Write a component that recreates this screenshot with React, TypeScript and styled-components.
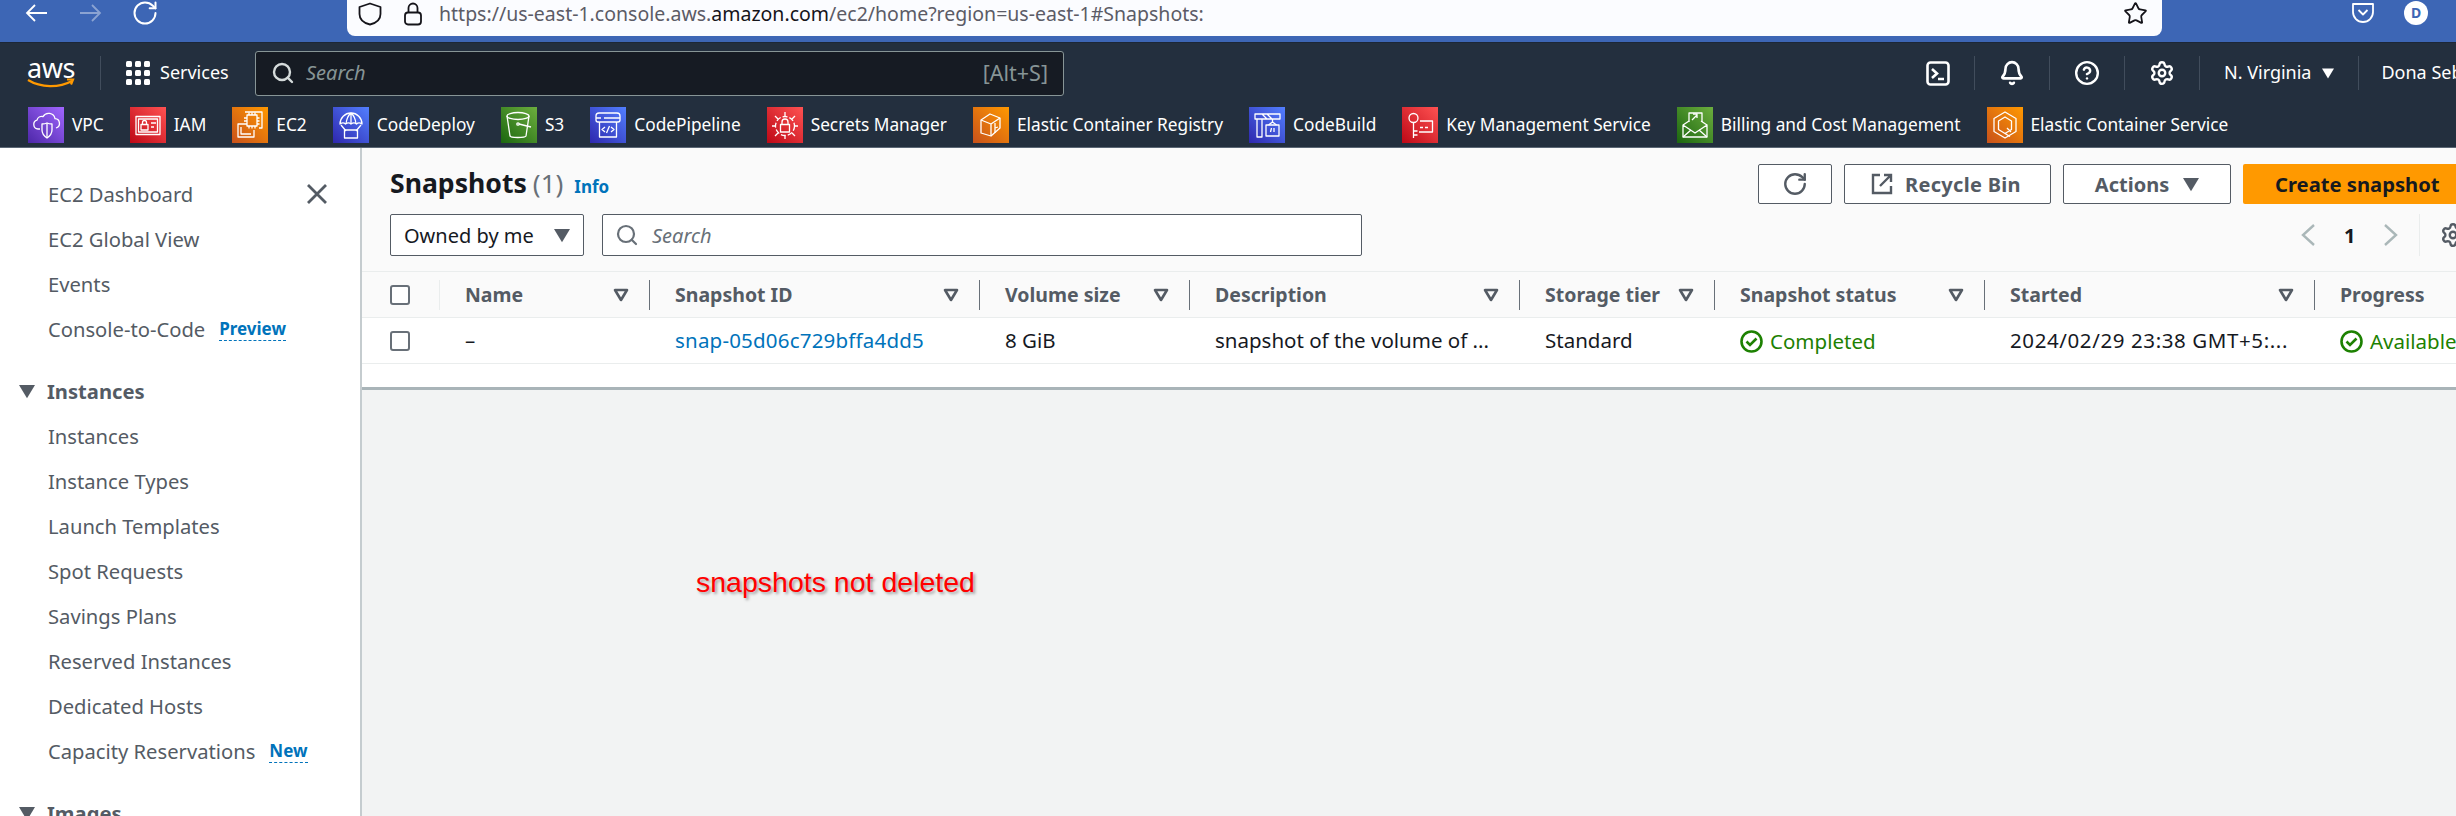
import styled, { createGlobalStyle } from 'styled-components';
import { Bell, CircleHelp, RotateCw, Search, Settings, Star } from 'lucide-react';
import type { ReactNode } from 'react';

const FONT = '"Noto Sans", "Open Sans", Arial, sans-serif';

const GlobalStyle = createGlobalStyle`
  html, body {
    margin: 0;
    width: 2456px;
    height: 816px;
    overflow: hidden;
    background: #fff;
    font-family: ${FONT};
  }
  * { box-sizing: border-box; }
`;

const TONES = {
  purple: 'linear-gradient(45deg, #4d27a8, #a166ff)',
  red: 'linear-gradient(45deg, #bd0816, #ff5252)',
  orange: 'linear-gradient(45deg, #c8511b, #ff9900)',
  blue: 'linear-gradient(45deg, #2e27ad, #527fff)',
  green: 'linear-gradient(45deg, #1b660f, #6cae3e)',
};

type Tone = keyof typeof TONES;

const Glyph = ({ children }: { children: ReactNode }) => (
  <svg width="36" height="36" viewBox="0 0 36 36" fill="none" stroke="#fff" strokeWidth="1.3" strokeLinejoin="round">
    {children}
  </svg>
);

const SERVICES: { name: string; tone: Tone; glyph: ReactNode }[] = [
  {
    name: 'VPC',
    tone: 'purple',
    glyph: (
      <>
        <path d="M12 22H10a4.5 4.5 0 0 1-1-8.8 5 5 0 0 1 6-3.6 6.5 6.5 0 0 1 12 2 4.8 4.8 0 0 1 1 9.4" />
        <path d="M14 17c3 0 5-1 5-1s2 1 5 1v6c0 4-2 6-5 8-3-2-5-4-5-8z" />
        <path d="M19 16v15" />
      </>
    ),
  },
  {
    name: 'IAM',
    tone: 'red',
    glyph: (
      <>
        <rect x="6" y="9.5" width="24" height="18" />
        <rect x="8.5" y="12" width="19" height="13" />
        <rect x="11" y="17.5" width="7" height="5.5" />
        <path d="M12.5 17.5v-2a2 2 0 0 1 4 0v2M21 16h5M21 20h3" />
      </>
    ),
  },
  {
    name: 'EC2',
    tone: 'orange',
    glyph: (
      <>
        <path d="M13 5h17v16h-3" />
        <path d="M12 17H6v13h16v-7" />
        <path d="M9 20v7h10" />
        <rect x="15" y="8" width="10" height="11" />
        <path d="M17 5.5V8M20 5.5V8M23 5.5V8M17 19v2.5M20 19v2.5M23 19v2.5M12 11h3M12 14h3M12 17h3M25 11h2.5M25 14h2.5M25 17h2.5" />
      </>
    ),
  },
  {
    name: 'CodeDeploy',
    tone: 'blue',
    glyph: (
      <>
        <path d="M7 17a11 11 0 0 1 22 0c-2-1.5-4-1.5-5.5 0-1.5-1.5-3.5-1.5-5.5 0-1.5-1.5-3.5-1.5-5.5 0C11 15.5 9 15.5 7 17z" />
        <path d="M18 6v11M18 6c-3 2.5-4.5 6-5 11M18 6c3 2.5 4.5 6 5 11M8 18l5 6M28 18l-5 6" />
        <rect x="11.5" y="23" width="13" height="8" />
      </>
    ),
  },
  {
    name: 'S3',
    tone: 'green',
    glyph: (
      <>
        <ellipse cx="17" cy="9" rx="11" ry="3.5" />
        <path d="M6 9l3 20c.5 2 15 2 16 0l3-20" />
        <path d="M18 17l12 3" />
        <circle cx="17" cy="17" r="1.2" />
      </>
    ),
  },
  {
    name: 'CodePipeline',
    tone: 'blue',
    glyph: (
      <>
        <path d="M9 15H8a2 2 0 0 1-2-2V9a3 3 0 0 1 3-3h18a3 3 0 0 1 3 3v4a2 2 0 0 1-2 2h-1" />
        <path d="M6 11h5M14 11h16" />
        <rect x="9.5" y="15" width="17" height="15" />
        <path d="M15 20l-3 2.5 3 2.5M21 20l3 2.5-3 2.5M19.5 19l-3 7" />
      </>
    ),
  },
  {
    name: 'Secrets Manager',
    tone: 'red',
    glyph: (
      <>
        <circle cx="18" cy="19" r="9.5" strokeDasharray="5 2" />
        <rect x="13.5" y="17.5" width="9" height="7.5" />
        <path d="M15 17.5V15a3 3 0 0 1 6 0v2.5M18 5v4M18 29v3M5 19h3M28 19h3M8 9l3 3M28 9l-3 3M8 29l3-3M28 29l-3-3" />
      </>
    ),
  },
  {
    name: 'Elastic Container Registry',
    tone: 'orange',
    glyph: (
      <>
        <path d="M8 13l9-6 10 4v10l-9 8-10-3z" />
        <path d="M8 13l10 4v12M18 17l9-6M22 16v10M22 21l3-1" />
      </>
    ),
  },
  {
    name: 'CodeBuild',
    tone: 'blue',
    glyph: (
      <>
        <path d="M6 7h25v5H6zM8 12v18h5V12M13 7l5 5M18 7l5 5" />
        <rect x="17" y="18" width="13" height="11" />
        <path d="M23.5 12v3l-4 3M23.5 15l4 3M21.5 25l1-4M25 21v4" />
      </>
    ),
  },
  {
    name: 'Key Management Service',
    tone: 'red',
    glyph: (
      <>
        <circle cx="11.5" cy="11" r="4.5" />
        <path d="M11.5 15.5V31M11.5 24h4M11.5 28h4M18 14h12.5v11H17" />
        <path d="M18 20.5h3M23 20.5h3" />
      </>
    ),
  },
  {
    name: 'Billing and Cost Management',
    tone: 'green',
    glyph: (
      <>
        <path d="M12 15V6h13v9" />
        <path d="M15 13l5-5M16 7h4v4" />
        <path d="M6 18l6-4M30 18l-6-4M6 18v12h24V18l-12 8z" />
        <path d="M6 30l8-7M30 30l-8-7" />
      </>
    ),
  },
  {
    name: 'Elastic Container Service',
    tone: 'orange',
    glyph: (
      <>
        <path d="M18 5l11 6.5v13L18 31 7 24.5v-13z" />
        <path d="M18 10l6.5 4v8.5L18 26.5l-6.5-4V14zM18 26.5l5 3M20 21l4 4" />
      </>
    ),
  },
];

const GRID = '78px 210px 330px 210px 330px 195px 270px 330px 200px';

const COLUMNS = ['Name', 'Snapshot ID', 'Volume size', 'Description', 'Storage tier', 'Snapshot status', 'Started'];

const NAV_TOP = ['EC2 Dashboard', 'EC2 Global View', 'Events'];
const NAV_INSTANCES = ['Instances', 'Instance Types', 'Launch Templates', 'Spot Requests', 'Savings Plans', 'Reserved Instances', 'Dedicated Hosts'];

const SortMark = () => (
  <svg width="16" height="14" viewBox="0 0 16 14" fill="none" stroke="#545b64" strokeWidth="2.6" strokeLinejoin="round">
    <path d="M2 2h12l-6 10z" />
  </svg>
);

const CheckedCircle = () => (
  <svg width="23" height="23" viewBox="0 0 23 23" fill="none" stroke="#1d8102" strokeWidth="2.6">
    <circle cx="11.5" cy="11.5" r="10" />
    <path d="M6.5 11.5l3.5 3.5 6.5-6.5" />
  </svg>
);

const Caret = ({ size = 13, color = '#545b64' }: { size?: number; color?: string }) => (
  <svg width={size} height={size} viewBox="0 0 12 12" fill={color}>
    <path d="M0 1.5h12L6 11.5z" />
  </svg>
);

export default function App() {
  return (
    <Page>
      <GlobalStyle />
      <BrowserBar>
        <BrowserNav>
          <svg width="22" height="20" viewBox="0 0 22 20" fill="none" stroke="#fff" strokeWidth="1.8">
            <path d="M22 10H2M10 2l-8 8 8 8" />
          </svg>
          <DimIcon>
            <svg width="22" height="20" viewBox="0 0 22 20" fill="none" stroke="#fff" strokeWidth="1.8">
              <path d="M0 10h20M12 2l8 8-8 8" />
            </svg>
          </DimIcon>
          <ReloadSlot><RotateCw size={28} strokeWidth={1.7} /></ReloadSlot>
        </BrowserNav>
        <UrlBar>
          <svg width="24" height="24" viewBox="0 0 24 24" fill="none" stroke="#15141a" strokeWidth="1.8" strokeLinejoin="round">
            <path d="M12 1.5L22.5 5v7c0 5.5-4 9-10.5 10.5C5.5 21 1.5 17.5 1.5 12V5z" />
          </svg>
          <svg width="20" height="24" viewBox="0 0 20 24" fill="none" stroke="#15141a" strokeWidth="1.8">
            <rect x="2" y="10.5" width="16" height="12" rx="3" />
            <path d="M5.5 10.5V6a4.5 4.5 0 0 1 9 0v4.5" />
          </svg>
          <UrlText>https://us-east-1.console.aws.<b>amazon.com</b>/ec2/home?region=us-east-1#Snapshots:</UrlText>
          <StarSlot><Star size={25} strokeWidth={1.7} /></StarSlot>
        </UrlBar>
        <BrowserExtras>
          <svg width="24" height="22" viewBox="0 0 24 22" fill="none" stroke="#fff" strokeWidth="1.8" strokeLinejoin="round">
            <path d="M2 2h20v8a10 10 0 0 1-20 0z" />
            <path d="M7.5 8l4.5 4.5L16.5 8" />
          </svg>
          <Avatar>D</Avatar>
        </BrowserExtras>
      </BrowserBar>

      <ConsoleHeader>
        <TopRow>
          <AwsLogo>
            <AwsWord>aws</AwsWord>
            <svg width="48" height="11" viewBox="0 0 48 11" fill="none" stroke="#ff9900" strokeWidth="2.2">
              <path d="M1 2c13 8 31 8 44 1" />
              <path d="M40 1.5h6l-2 5" />
            </svg>
          </AwsLogo>
          <LogoDivider />
          <ServicesMenu>
            <Dots>
              {Array.from({ length: 9 }).map((_, i) => <Dot key={i} />)}
            </Dots>
            <HeaderLabel>Services</HeaderLabel>
          </ServicesMenu>
          <GlobalSearch>
            <Search size={24} strokeWidth={2.4} color="#d5dbdb" />
            <SearchHint>Search</SearchHint>
            <Shortcut>[Alt+S]</Shortcut>
          </GlobalSearch>
          <Tools>
            <Tool>
              <svg width="24" height="25" viewBox="0 0 24 25" fill="none" stroke="#fff" strokeWidth="2.6">
                <rect x="1.5" y="1.5" width="21" height="22" rx="3" />
                <path d="M6 8l5 4.5L6 17M12 18h6" />
              </svg>
            </Tool>
            <Tool><Bell size={26} strokeWidth={2.4} /></Tool>
            <Tool><CircleHelp size={26} strokeWidth={2.2} /></Tool>
            <Tool><Settings size={26} strokeWidth={2.2} /></Tool>
            <Tool>
              <HeaderLabel>N. Virginia</HeaderLabel>
              <Caret size={12} color="#fff" />
            </Tool>
            <UserName>Dona Seb</UserName>
          </Tools>
        </TopRow>
        <Favorites>
          {SERVICES.map((s) => (
            <Favorite key={s.name}>
              <ServiceTile $tone={s.tone}><Glyph>{s.glyph}</Glyph></ServiceTile>
              <HeaderLabel>{s.name}</HeaderLabel>
            </Favorite>
          ))}
        </Favorites>
      </ConsoleHeader>

      <Body>
        <Sidebar>
          <NavTopItem>
            <span>{NAV_TOP[0]}</span>
            <svg width="20" height="20" viewBox="0 0 20 20" fill="none" stroke="#545b64" strokeWidth="2.8">
              <path d="M1 1l18 18M19 1L1 19" />
            </svg>
          </NavTopItem>
          {NAV_TOP.slice(1).map((n) => <NavItem key={n}>{n}</NavItem>)}
          <NavItem>Console-to-Code<Badge>Preview</Badge></NavItem>
          <NavGroup><Caret size={16} />Instances</NavGroup>
          {NAV_INSTANCES.map((n) => <NavItem key={n}>{n}</NavItem>)}
          <NavItem>Capacity Reservations<Badge>New</Badge></NavItem>
          <NavGroup><Caret size={16} />Images</NavGroup>
        </Sidebar>

        <Main>
          <ListPanel>
            <TitleRow>
              <Heading>
                <Title>Snapshots</Title>
                <Count>(1)</Count>
                <InfoLink>Info</InfoLink>
              </Heading>
              <Actions>
                <GhostButton $width={74}><RotateCw size={26} strokeWidth={2.2} /></GhostButton>
                <GhostButton $width={207}>
                  <svg width="24" height="24" viewBox="0 0 24 24" fill="none" stroke="#545b64" strokeWidth="2.4">
                    <path d="M10 3H3v18h18v-7M14 3h7v7M21 3L10 14" />
                  </svg>
                  <WideLabel>Recycle Bin</WideLabel>
                </GhostButton>
                <GhostButton $width={168}>Actions<Caret size={16} /></GhostButton>
                <PrimaryButton>Create snapshot</PrimaryButton>
              </Actions>
            </TitleRow>
            <FilterRow>
              <OwnerSelect>Owned by me<Caret size={16} /></OwnerSelect>
              <FilterSearch>
                <Search size={24} strokeWidth={2.2} color="#687078" />
                <em>Search</em>
              </FilterSearch>
              <Pager>
                <svg width="16" height="24" viewBox="0 0 16 24" fill="none" stroke="#aab7b8" strokeWidth="2.4"><path d="M14 2L3 12l11 10" /></svg>
                <PageNumber>1</PageNumber>
                <svg width="16" height="24" viewBox="0 0 16 24" fill="none" stroke="#aab7b8" strokeWidth="2.4"><path d="M2 2l11 10L2 22" /></svg>
                <PagerGear><Settings size={26} strokeWidth={2.2} color="#545b64" /></PagerGear>
              </Pager>
            </FilterRow>
            <HeadRow>
              <CheckHead><Checkbox /></CheckHead>
              {COLUMNS.map((c) => (
                <HeadCell key={c}>
                  <span>{c}</span>
                  <SortMark />
                </HeadCell>
              ))}
              <LastHeadCell>Progress</LastHeadCell>
            </HeadRow>
          </ListPanel>
          <DataArea>
            <DataRow>
              <CheckBody><Checkbox /></CheckBody>
              <BodyCell>–</BodyCell>
              <BodyCell><SnapshotLink>snap-05d06c729bffa4dd5</SnapshotLink></BodyCell>
              <BodyCell>8 GiB</BodyCell>
              <BodyCell>snapshot of the volume of ...</BodyCell>
              <BodyCell>Standard</BodyCell>
              <BodyCell><Status><CheckedCircle />Completed</Status></BodyCell>
              <BodyCell><DateText>2024/02/29 23:38 GMT+5:...</DateText></BodyCell>
              <BodyCell><Status><CheckedCircle />Available</Status></BodyCell>
            </DataRow>
          </DataArea>
          <EmptyArea>
            <Annotation>snapshots not deleted</Annotation>
          </EmptyArea>
        </Main>
      </Body>
    </Page>
  );
}

const Page = styled.div`
  width: 2456px;
  height: 816px;
  display: flex;
  flex-direction: column;
  overflow: hidden;
`;

const BrowserBar = styled.div`
  height: 42px;
  flex: none;
  display: flex;
  align-items: flex-start;
  background: #3d66b5;
  color: #fff;
`;

const BrowserNav = styled.div`
  width: 347px;
  height: 26px;
  flex: none;
  padding-left: 25px;
  display: flex;
  align-items: center;
  gap: 33px;
`;

const DimIcon = styled.span`
  display: flex;
  opacity: 0.4;
`;

const ReloadSlot = styled.span`
  display: flex;
  margin-left: -4px;
`;

const UrlBar = styled.div`
  width: 1815px;
  height: 36px;
  flex: none;
  padding: 0 12px 9px 11px;
  display: flex;
  align-items: center;
  gap: 21px;
  background: #fbfcff;
  border-radius: 0 0 8px 8px;
  color: #15141a;
`;

const UrlText = styled.div`
  margin-left: -5px;
  font-size: 19.5px;
  color: #5b5b66;
  white-space: nowrap;

  b {
    font-weight: 400;
    color: #15141a;
  }
`;

const StarSlot = styled.span`
  display: flex;
  margin-left: auto;
  margin-right: 2px;
`;

const BrowserExtras = styled.div`
  height: 25px;
  padding-left: 189px;
  display: flex;
  align-items: center;
  gap: 29px;
`;

const Avatar = styled.span`
  width: 24px;
  height: 24px;
  border-radius: 50%;
  background: #fff;
  color: #3d66b5;
  display: flex;
  align-items: center;
  justify-content: center;
  font-size: 14px;
  font-weight: 700;
`;

const ConsoleHeader = styled.header`
  height: 106px;
  flex: none;
  background: #232f3e;
  border-top: 1px solid #1c2737;
  border-bottom: 1px solid #5b6775;
  color: #fff;
`;

const TopRow = styled.div`
  height: 64px;
  display: flex;
  align-items: center;
  padding: 0 0 4px 27px;
  white-space: nowrap;
`;

const HeaderLabel = styled.span`
  padding-bottom: 2px;
`;

const AwsLogo = styled.div`
  width: 48px;
  flex: none;
  display: flex;
  flex-direction: column;
  align-items: center;
`;

const AwsWord = styled.span`
  font-size: 27px;
  line-height: 20px;
  letter-spacing: -0.5px;
`;

const LogoDivider = styled.span`
  width: 1px;
  height: 34px;
  margin: 0 25px;
  flex: none;
  background: #414d5c;
`;

const ServicesMenu = styled.div`
  width: 129px;
  flex: none;
  display: flex;
  align-items: center;
  gap: 10px;
  font-size: 18px;
`;

const Dots = styled.div`
  display: grid;
  grid-template-columns: repeat(3, 6px);
  grid-auto-rows: 6px;
  gap: 3px;
`;

const Dot = styled.i`
  border-radius: 1.5px;
  background: #fff;
`;

const GlobalSearch = styled.div`
  width: 809px;
  height: 45px;
  flex: none;
  padding: 0 15px;
  display: flex;
  align-items: center;
  gap: 11px;
  background: #161b23;
  border: 1px solid #879596;
  border-radius: 3px;
`;

const SearchHint = styled.em`
  padding-bottom: 2px;
  font-size: 20px;
  color: #879596;
`;

const Shortcut = styled.span`
  margin-left: auto;
  padding-bottom: 2px;
  font-size: 21.5px;
  color: #879596;
`;

const Tools = styled.div`
  margin-left: 838px;
  flex: none;
  display: flex;
  align-items: center;
`;

const Tool = styled.div`
  height: 34px;
  padding: 0 24px;
  display: flex;
  align-items: center;
  gap: 11px;
  border-right: 1px solid #414d5c;
  font-size: 18px;
`;

const UserName = styled.span`
  padding: 0 0 2px 22px;
  font-size: 18px;
`;

const Favorites = styled.nav`
  height: 36px;
  padding-left: 28px;
  display: flex;
  gap: 26px;
  white-space: nowrap;
`;

const Favorite = styled.div`
  display: flex;
  align-items: center;
  gap: 8px;
  flex: none;
  font-size: 17.3px;
`;

const ServiceTile = styled.span<{ $tone: Tone }>`
  width: 36px;
  height: 36px;
  display: block;
  background: ${(p) => TONES[p.$tone]};
`;

const Body = styled.div`
  flex: 1;
  min-height: 0;
  display: flex;
`;

const Sidebar = styled.aside`
  width: 362px;
  flex: none;
  padding: 23.5px 0 0;
  background: #fff;
  border-right: 2px solid #c5cccf;
  color: #545b64;
  font-size: 20.2px;
`;

const NavItem = styled.div`
  height: 45px;
  padding-left: 48px;
  display: flex;
  align-items: center;
`;

const NavTopItem = styled(NavItem)`
  justify-content: space-between;
  padding-right: 33px;
`;

const NavGroup = styled.div`
  height: 45px;
  margin-top: 17px;
  padding-left: 19px;
  display: flex;
  align-items: center;
  gap: 12px;
  font-weight: 700;
`;

const Badge = styled.span`
  margin-left: 14px;
  font-size: 17px;
  font-weight: 700;
  color: #0073bb;
  border-bottom: 1px dashed #0073bb;
`;

const Main = styled.main`
  flex: 1;
  min-width: 0;
  display: flex;
  flex-direction: column;
  overflow: hidden;
`;

const ListPanel = styled.section`
  background: #fafafa;
  padding-top: 16px;
`;

const TitleRow = styled.div`
  height: 40px;
  padding-left: 28px;
  display: flex;
  align-items: center;
`;

const Heading = styled.div`
  width: 1368px;
  flex: none;
  margin-top: -3px;
  display: flex;
  align-items: baseline;
`;

const Title = styled.h1`
  margin: 0 6px 0 0;
  font-size: 26.6px;
  font-weight: 700;
  color: #16191f;
`;

const Count = styled.span`
  font-size: 26px;
  color: #687078;
`;

const InfoLink = styled.a`
  margin-left: 11px;
  font-size: 17px;
  font-weight: 700;
  color: #0073bb;
`;

const Actions = styled.div`
  flex: none;
  display: flex;
  gap: 12px;
`;

const GhostButton = styled.button<{ $width: number }>`
  width: ${(p) => p.$width}px;
  height: 40px;
  padding: 0;
  display: flex;
  align-items: center;
  justify-content: center;
  gap: 14px;
  background: #fff;
  border: 1px solid #545b64;
  border-radius: 2px;
  color: #545b64;
  font: 700 20px ${FONT};
`;

const WideLabel = styled.span`
  margin: 0 4px 0 -3px;
  letter-spacing: 0.3px;
`;

const PrimaryButton = styled.button`
  width: 240px;
  height: 40px;
  padding: 0 0 0 32px;
  text-align: left;
  background: #ff9900;
  border: none;
  border-radius: 2px;
  color: #16191f;
  font: 700 20.2px ${FONT};
`;

const FilterRow = styled.div`
  height: 42px;
  margin: 10px 0 15px;
  padding-left: 28px;
  display: flex;
  align-items: center;
  white-space: nowrap;
`;

const OwnerSelect = styled.div`
  width: 194px;
  height: 42px;
  flex: none;
  padding: 0 13px;
  display: flex;
  align-items: center;
  justify-content: space-between;
  background: #fff;
  border: 1px solid #545b64;
  border-radius: 2px;
  color: #16191f;
  font-size: 20px;
`;

const FilterSearch = styled.div`
  width: 760px;
  height: 42px;
  flex: none;
  margin-left: 18px;
  padding: 0 12px;
  display: flex;
  align-items: center;
  gap: 13px;
  background: #fff;
  border: 1px solid #545b64;
  border-radius: 2px;
  color: #687078;
  font-size: 20px;
`;

const Pager = styled.div`
  margin-left: 938px;
  flex: none;
  display: flex;
  align-items: center;
  gap: 28px;
`;

const PageNumber = styled.span`
  font-size: 20px;
  font-weight: 700;
  color: #16191f;
`;

const PagerGear = styled.span`
  height: 42px;
  margin-left: -8px;
  padding-left: 20px;
  display: flex;
  align-items: center;
  border-left: 1px solid #eaeded;
`;

const HeadRow = styled.div`
  height: 47px;
  display: grid;
  grid-template-columns: ${GRID};
  align-items: center;
  border-top: 1px solid #eaeded;
  border-bottom: 1px solid #eaeded;
  white-space: nowrap;
`;

const HeadCell = styled.div`
  height: 30px;
  padding: 0 20px 0 25px;
  display: flex;
  align-items: center;
  justify-content: space-between;
  border-right: 1px solid #687078;
  color: #545b64;
  font-size: 19.5px;
  font-weight: 700;
`;

const LastHeadCell = styled(HeadCell)`
  border-right: none;
`;

const CheckHead = styled.div`
  height: 30px;
  padding-left: 28px;
  display: flex;
  align-items: center;
  border-right: 1px solid #eaeded;
`;

const CheckBody = styled.div`
  padding-left: 28px;
  display: flex;
  align-items: center;
`;

const Checkbox = styled.span`
  width: 20px;
  height: 20px;
  display: block;
  background: #fff;
  border: 2px solid #687078;
  border-radius: 3px;
`;

const DataArea = styled.section`
  height: 72px;
  flex: none;
  background: #fff;
  border-bottom: 3px solid #a9b4b8;
`;

const DataRow = styled.div`
  height: 46px;
  display: grid;
  grid-template-columns: ${GRID};
  align-items: center;
  border-bottom: 1px solid #eaeded;
  color: #16191f;
  font-size: 20.5px;
  white-space: nowrap;
`;

const BodyCell = styled.div`
  padding: 0 0 2px 25px;
`;

const SnapshotLink = styled.a`
  color: #0073bb;
  letter-spacing: 0.2px;
`;

const DateText = styled.span`
  letter-spacing: 0.6px;
`;

const Status = styled.span`
  margin-top: 3px;
  display: flex;
  align-items: center;
  gap: 7px;
  color: #1d8102;
`;

const EmptyArea = styled.section`
  flex: 1;
  padding: 176px 0 0 334px;
  background: #f2f3f3;
`;

const Annotation = styled.p`
  margin: 0;
  font: 28.5px/32px "Liberation Sans", Arial, sans-serif;
  color: #ff0000;
  text-shadow: 2px 2px 3px rgba(0, 0, 0, 0.35);
`;
